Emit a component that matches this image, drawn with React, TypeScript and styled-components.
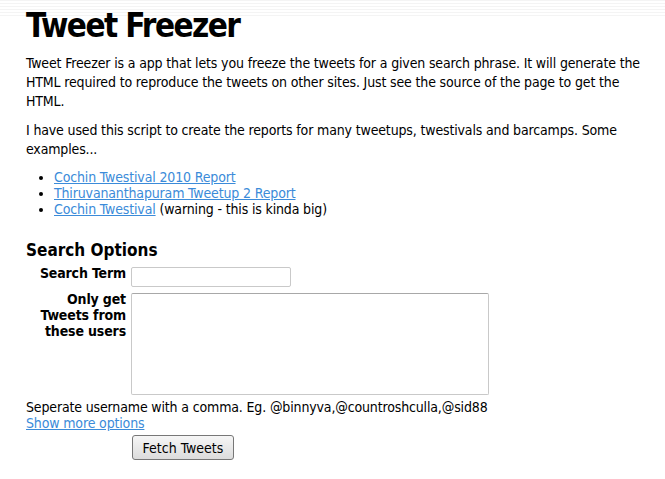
import React from "react";
import styled, { createGlobalStyle } from "styled-components";

const Global = createGlobalStyle`
  html, body { margin: 0; padding: 0; background: #fff; }
  body {
    font-family: "DejaVu Sans Condensed", "DejaVu Sans", sans-serif;
    font-stretch: condensed;
    font-size: 14px;
    letter-spacing: -0.15px;
    color: #000;
    background: repeating-linear-gradient(to bottom, #f4f4f4 0px, #f4f4f4 1px, #fff 1px, #fff 3px) top left / 100% 16px no-repeat, #fff;
  }
`;

const Page = styled.div`
  padding: 6px 12px 0 26px;
`;

const Title = styled.h1`
  font-size: 33px;
  font-weight: bold;
  margin: 0 0 8px 0;
  line-height: 40px;
  letter-spacing: -1.6px;
`;

const Para = styled.p`
  margin: 0 0 10px 0;
  line-height: 19px;
`;

const List = styled.ul`
  margin: 0 0 22px 0;
  padding-left: 28px;
  line-height: 16px;
`;

const Link = styled.a`
  color: #3b8bd9;
  text-decoration: underline;
`;

const SectionTitle = styled.h2`
  font-size: 17px;
  font-weight: bold;
  margin: 0 0 6px 0;
  line-height: 22px;
  letter-spacing: 0;
`;

const FormGrid = styled.div`
  display: grid;
  grid-template-columns: 100px auto;
  column-gap: 5px;
  row-gap: 6px;
  align-items: start;
`;

const Label = styled.label`
  font-weight: bold;
  text-align: right;
  line-height: 16px;
  margin-top: -2px;
`;

const TextInput = styled.input`
  width: 160px;
  height: 20px;
  box-sizing: border-box;
  border: 1px solid #c9c9c9;
  border-radius: 2px;
  font: inherit;
  justify-self: start;
`;

const TextArea = styled.textarea`
  width: 358px;
  height: 102px;
  box-sizing: border-box;
  border: 1px solid #c9c9c9;
  border-top-color: #a8a8a8;
  border-radius: 2px;
  font: inherit;
  resize: none;
  justify-self: start;
`;

const Note = styled.div<{ $gap?: number }>`
  margin-top: ${(p) => p.$gap ?? 0}px;
  line-height: 16px;
`;

const ButtonRow = styled.div`
  padding: 4px 0 0 106px;
`;

const Button = styled.button`
  width: 102px;
  height: 25px;
  font: inherit;
  font-size: 14px;
  color: #000;
  border: 1px solid #777;
  border-radius: 3px;
  background: linear-gradient(to bottom, #f6f6f6, #dcdcdc);
  padding: 0;
`;

export default function App() {
  return (
    <>
      <Global />
      <Page>
        <Title>Tweet Freezer</Title>
        <Para>
          Tweet Freezer is a app that lets you freeze the tweets for a given search phrase. It will generate the
          HTML required to reproduce the tweets on other sites. Just see the source of the page to get the HTML.
        </Para>
        <Para>
          I have used this script to create the reports for many tweetups, twestivals and barcamps. Some examples...
        </Para>
        <List>
          <li><Link href="#">Cochin Twestival 2010 Report</Link></li>
          <li><Link href="#">Thiruvananthapuram Tweetup 2 Report</Link></li>
          <li><Link href="#">Cochin Twestival</Link> (warning - this is kinda big)</li>
        </List>
        <SectionTitle>Search Options</SectionTitle>
        <FormGrid>
          <Label>Search Term</Label>
          <TextInput type="text" />
          <Label>Only get Tweets from these users</Label>
          <TextArea />
        </FormGrid>
        <Note $gap={4}>Seperate username with a comma. Eg. @binnyva,@countroshculla,@sid88</Note>
        <Note>
          <Link href="#">Show more options</Link>
        </Note>
        <ButtonRow>
          <Button>Fetch Tweets</Button>
        </ButtonRow>
      </Page>
    </>
  );
}
